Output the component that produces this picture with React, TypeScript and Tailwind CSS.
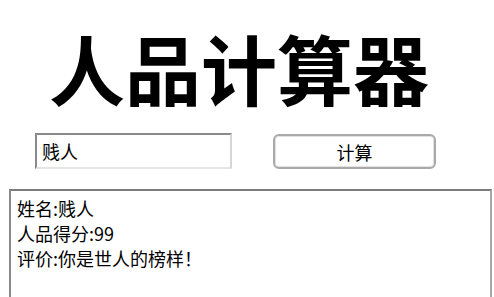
import React from "react";

const cjk = { fontFamily: '"Noto Sans CJK SC", "Noto Sans", sans-serif' };

export default function App() {
	const [name, setName] = React.useState("贱人");

	return (
		<div className="h-[297px] w-[494px] overflow-hidden bg-white text-black" style={cjk}>
			<h1 className="pl-[49px] pt-[29px] text-[76px] font-bold leading-none tracking-normal">
				人品计算器
			</h1>

			<div className="mt-[28px] flex items-start pl-[35px]">
				<input
					value={name}
					onChange={(e) => setName(e.target.value)}
					className="h-[36px] w-[197px] border-2 border-t-[#8a8a8a] border-l-[#8a8a8a] border-r-[#d6d6d6] border-b-[#e4e4e4] bg-white px-[5px] text-[18px] text-black outline-none"
				/>
				<button
					type="button"
					className="ml-[41px] mt-[1px] h-[35px] w-[163px] rounded-[6px] border-2 border-[#a9a9a9] bg-white text-[18px] leading-none text-black shadow-[inset_0_0_0_1px_#e2e2e2]"
				>
					计算
				</button>
			</div>

			<div className="ml-[9px] mt-[20px] h-[200px] w-[483px] border-2 border-t-[#7c7c7c] border-l-[#8a8a8a] border-r-[#a8a8a8] border-b-[#d0d0d0] px-[6px] pt-[5px] text-[18px] leading-[25px]">
				<div>姓名:贱人</div>
				<div>人品得分:99</div>
				<div>评价:你是世人的榜样！</div>
			</div>
		</div>
	);
}
